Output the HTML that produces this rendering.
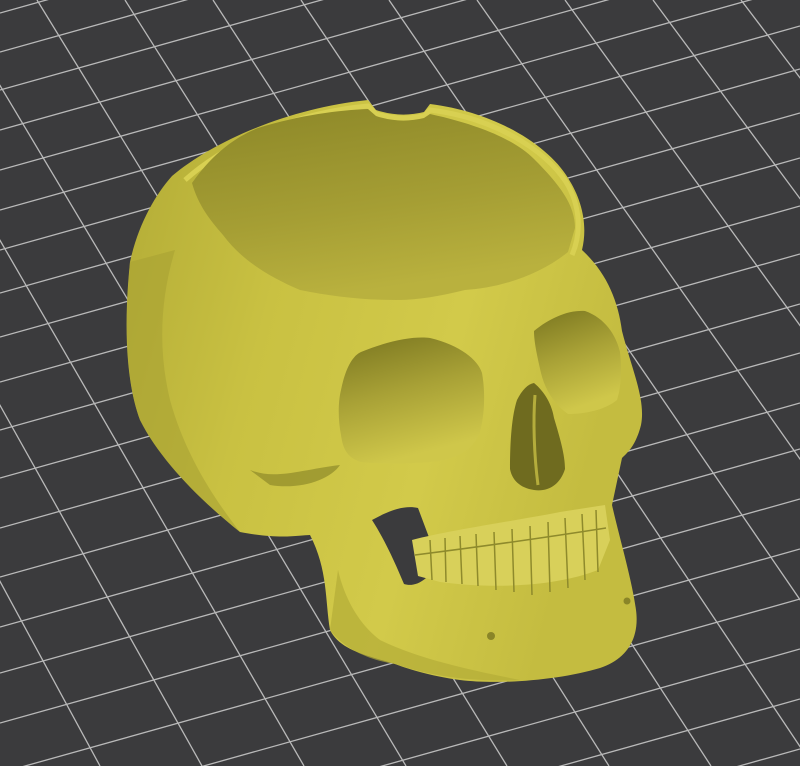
<!DOCTYPE html>
<html><head><meta charset="utf-8"><style>
html,body{margin:0;padding:0;background:#3b3b3d;width:800px;height:766px;overflow:hidden}
svg{display:block;overflow:hidden}
</style></head><body>
<svg width="800" height="766" viewBox="0 0 800 766" xmlns="http://www.w3.org/2000/svg">
<defs>
<linearGradient id="sk" x1="0" y1="0" x2="1" y2="0.3">
<stop offset="0" stop-color="#b2ab36"/><stop offset="0.35" stop-color="#c9c142"/><stop offset="0.7" stop-color="#d2ca4a"/><stop offset="1" stop-color="#c4bc40"/>
</linearGradient>
<linearGradient id="bowl" x1="0" y1="0" x2="0.3" y2="1">
<stop offset="0" stop-color="#8c8728"/><stop offset="0.6" stop-color="#a59e34"/><stop offset="1" stop-color="#b9b13e"/>
</linearGradient>
<linearGradient id="eye" x1="0" y1="0" x2="0.3" y2="1">
<stop offset="0" stop-color="#7a7620"/><stop offset="0.5" stop-color="#a8a136"/><stop offset="1" stop-color="#cfc74a"/>
</linearGradient>
<clipPath id="c"><rect width="800" height="766"/></clipPath>
</defs>
<g clip-path="url(#c)">
<rect width="800" height="766" fill="#3b3b3d"/>
<g stroke="#b9b9b9" stroke-width="1.3" fill="none">
<line x1="0" y1="-27" x2="800" y2="-251"/>
<line x1="0" y1="13" x2="800" y2="-211"/>
<line x1="0" y1="52" x2="800" y2="-172"/>
<line x1="0" y1="90" x2="800" y2="-134"/>
<line x1="0" y1="130" x2="800" y2="-94"/>
<line x1="0" y1="170" x2="800" y2="-54"/>
<line x1="0" y1="210" x2="800" y2="-14"/>
<line x1="0" y1="250" x2="800" y2="26"/>
<line x1="0" y1="293" x2="800" y2="69"/>
<line x1="0" y1="337" x2="800" y2="113"/>
<line x1="0" y1="382" x2="800" y2="158"/>
<line x1="0" y1="430" x2="800" y2="206"/>
<line x1="0" y1="478" x2="800" y2="254"/>
<line x1="0" y1="528" x2="800" y2="304"/>
<line x1="0" y1="577" x2="800" y2="353"/>
<line x1="0" y1="627" x2="800" y2="403"/>
<line x1="0" y1="673" x2="800" y2="449"/>
<line x1="0" y1="723" x2="800" y2="499"/>
<line x1="0" y1="773" x2="800" y2="549"/>
<line x1="0" y1="823" x2="800" y2="599"/>
<line x1="0" y1="873" x2="800" y2="649"/>
<line x1="0" y1="923" x2="800" y2="699"/>
<line x1="0" y1="973" x2="800" y2="749"/>
<line x1="0" y1="1023" x2="800" y2="799"/>
<line x1="-403" y1="0" x2="-2" y2="766"/>
<line x1="-315" y1="0" x2="100" y2="766"/>
<line x1="-227" y1="0" x2="202" y2="766"/>
<line x1="-139" y1="0" x2="304" y2="766"/>
<line x1="-51" y1="0" x2="406" y2="766"/>
<line x1="37" y1="0" x2="507" y2="766"/>
<line x1="125" y1="0" x2="609" y2="766"/>
<line x1="213" y1="0" x2="711" y2="766"/>
<line x1="301" y1="0" x2="813" y2="766"/>
<line x1="389" y1="0" x2="914" y2="766"/>
<line x1="477" y1="0" x2="1016" y2="766"/>
<line x1="565" y1="0" x2="1118" y2="766"/>
<line x1="653" y1="0" x2="1220" y2="766"/>
<line x1="741" y1="0" x2="1322" y2="766"/>
</g>
<path d="M172,176 C215,140 290,108 368,100 L376,110 Q400,118 424,112 L430,104 C495,112 548,145 568,178 C582,200 588,225 582,250 C606,272 618,300 622,331 C632,370 646,400 641,425 C636,445 628,452 622,458 L612,505 C620,540 632,580 636,610 C640,640 625,660 600,668 C560,680 500,685 460,680 C430,676 405,668 395,664 C365,655 340,650 330,630 C325,600 328,570 310,535 C300,535 280,540 240,532 C200,500 160,460 140,420 C125,380 124,320 130,262 C138,225 155,195 172,176 Z" fill="url(#sk)"/>
<path d="M372,520 C390,510 405,505 418,508 L430,540 L426,578 C418,585 410,586 404,584 C396,565 385,540 372,520 Z" fill="#3b3b3d"/>
<path d="M185,180 C230,140 300,112 368,106 L376,114 Q400,121 424,116 L430,110 C495,118 545,150 566,182 C580,205 582,232 572,255" fill="none" stroke="#d8d052" stroke-width="5"/>
<path d="M192,183 C215,150 240,135 258,128 C300,115 340,110 368,109 L376,116 Q400,124 424,118 L430,114 C480,125 515,140 534,159 C560,185 575,205 575,228 L568,252 C540,275 500,288 465,290 C440,296 420,300 396,300 C360,300 330,296 300,290 C265,275 240,258 223,235 C210,220 198,205 192,183 Z" fill="url(#bowl)"/>
<path d="M130,262 C125,320 125,380 140,420 C160,460 200,500 240,532 C215,500 185,455 170,400 C158,350 160,300 175,250 Z" fill="#a8a134" opacity="0.6"/>
<path d="M250,470 C275,480 300,470 340,465 C330,480 300,490 270,485 Z" fill="#8f8a2a" opacity="0.7"/>
<path d="M341,390 C345,370 352,356 361,352 C390,340 415,336 430,338 C460,345 478,360 482,373 C486,395 484,420 479,435 C470,452 455,460 430,462 C405,464 380,464 361,462 C348,458 343,450 341,435 C338,420 338,402 341,390 Z" fill="url(#eye)"/>
<path d="M534,331 C550,318 568,310 585,311 C605,318 616,335 620,352 C622,370 621,388 617,400 C605,410 585,414 568,414 C555,405 545,390 541,373 C537,355 534,342 534,331 Z" fill="url(#eye)"/>
<path d="M510,469 C510,440 512,415 517,400 C522,390 528,384 534,383 C545,392 552,405 554,418 C560,438 565,455 565,469 C560,485 548,492 534,490 C520,488 512,480 510,469 Z" fill="#6f6b1f"/>
<path d="M535,395 C533,420 534,455 538,485" stroke="#b5ad3c" stroke-width="3" fill="none"/>
<path d="M412,540 C450,530 520,520 560,512 L605,505 L610,540 L598,570 C560,585 500,590 440,582 L418,576 Z" fill="#d8d05a"/>
<g stroke="#8e8a2c" stroke-width="1.5" fill="none">
<path d="M415,555 C470,548 530,540 606,528"/>
<path d="M430,540 L432,580 M445,538 L446,582 M460,536 L462,584 M476,534 L478,586 M494,532 L496,590 M512,529 L514,592 M530,526 L532,595 M548,522 L550,592 M565,518 L568,588 M582,514 L585,580 M596,510 L598,572"/>
</g>
<path d="M330,630 C345,650 370,660 395,664 C430,676 470,682 520,680 C480,672 420,660 380,640 C360,625 345,600 338,570 Z" fill="#b3ac38" opacity="0.7"/>
<circle cx="491" cy="636" r="4" fill="#8a8528"/>
<circle cx="627" cy="601" r="3.5" fill="#8a8528"/>
</g>
</svg>
</body></html>
